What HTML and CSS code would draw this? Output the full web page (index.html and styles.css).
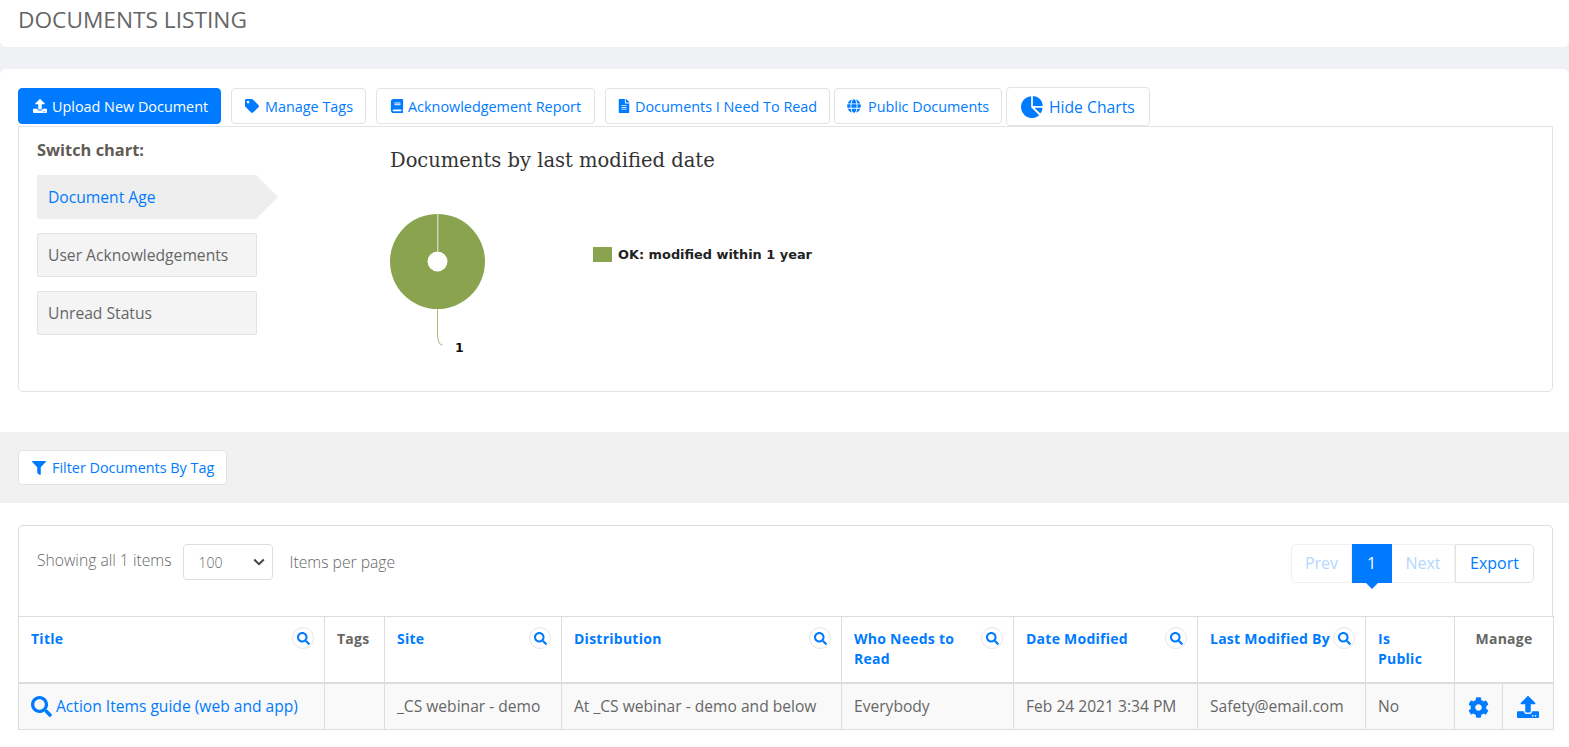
FILE: index.html
```html
<!DOCTYPE html>
<html lang="en">
<head>
<meta charset="utf-8">
<title>Documents Listing</title>
<link rel="stylesheet" href="styles.css">
</head>
<body>
<div class="top-zone">
<header class="page-head"><h1>DOCUMENTS LISTING</h1></header>

<section class="panel">
  <div class="toolbar">
    <a class="btn btn-primary"><svg class="ico" viewBox="0 0 512 512"><path d="M296 384h-80c-13.3 0-24-10.7-24-24V192h-87.7c-17.8 0-26.7-21.5-14.1-34.1L242.3 5.7c7.5-7.5 19.8-7.5 27.3 0l152.2 152.2c12.6 12.6 3.7 34.1-14.1 34.1H320v168c0 13.3-10.7 24-24 24zm216-8v112c0 13.3-10.7 24-24 24H24c-13.3 0-24-10.7-24-24V376c0-13.3 10.7-24 24-24h136v8c0 30.9 25.1 56 56 56h80c30.9 0 56-25.1 56-56v-8h136c13.3 0 24 10.7 24 24zm-124 88c0-11-9-20-20-20s-20 9-20 20 9 20 20 20 20-9 20-20zm64 0c0-11-9-20-20-20s-20 9-20 20 9 20 20 20 20-9 20-20z"/></svg>Upload New Document</a>
    <a class="btn btn-tags"><svg class="ico" viewBox="0 0 512 512"><path d="M0 252.118V48C0 21.49 21.49 0 48 0h204.118a48 48 0 0 1 33.941 14.059l211.882 211.882c18.745 18.745 18.745 49.137 0 67.882L293.823 497.941c-18.745 18.745-49.137 18.745-67.882 0L14.059 286.059A48 48 0 0 1 0 252.118zM112 64c-26.51 0-48 21.49-48 48s21.49 48 48 48 48-21.49 48-48-21.49-48-48-48z"/></svg>Manage Tags</a>
    <a class="btn btn-ack"><svg class="ico" viewBox="0 0 448 512"><path d="M448 360V24c0-13.3-10.7-24-24-24H96C43 0 0 43 0 96v320c0 53 43 96 96 96h328c13.3 0 24-10.7 24-24v-16c0-7.5-3.5-14.3-8.9-18.7-4.2-15.4-4.2-59.3 0-74.7 5.4-4.3 8.9-11.1 8.9-18.6zM128 134c0-3.3 2.7-6 6-6h212c3.3 0 6 2.7 6 6v20c0 3.3-2.7 6-6 6H134c-3.3 0-6-2.7-6-6v-20zm0 64c0-3.3 2.7-6 6-6h212c3.3 0 6 2.7 6 6v20c0 3.3-2.7 6-6 6H134c-3.3 0-6-2.7-6-6v-20zm253.4 250H96c-17.7 0-32-14.3-32-32 0-17.6 14.4-32 32-32h285.4c-1.9 17.1-1.9 46.9 0 64z"/></svg>Acknowledgement Report</a>
    <a class="btn btn-read"><svg class="ico" viewBox="0 0 384 512"><path d="M224 136V0H24C10.7 0 0 10.7 0 24v464c0 13.3 10.7 24 24 24h336c13.3 0 24-10.7 24-24V160H248c-13.2 0-24-10.8-24-24zm64 236c0 6.6-5.4 12-12 12H108c-6.6 0-12-5.4-12-12v-8c0-6.6 5.4-12 12-12h168c6.6 0 12 5.4 12 12v8zm0-64c0 6.6-5.4 12-12 12H108c-6.6 0-12-5.4-12-12v-8c0-6.6 5.4-12 12-12h168c6.6 0 12 5.4 12 12v8zm0-72v8c0 6.6-5.4 12-12 12H108c-6.6 0-12-5.4-12-12v-8c0-6.6 5.4-12 12-12h168c6.6 0 12 5.4 12 12zm96-114.1v6.1H256V0h6.1c6.4 0 12.5 2.5 17 7l97.9 98c4.5 4.5 7 10.6 7 16.9z"/></svg>Documents I Need To Read</a>
    <a class="btn btn-public"><svg class="ico" viewBox="0 0 496 512"><path d="M336.5 160C322 70.7 287.8 8 248 8s-74 62.7-88.5 152h177zM152 256c0 22.2 1.2 43.5 3.3 64h185.3c2.1-20.5 3.3-41.8 3.3-64s-1.2-43.5-3.3-64H155.3c-2.1 20.5-3.3 41.8-3.3 64zm324.7-96c-28.6-67.9-86.5-120.4-158-141.6 24.4 33.8 41.2 84.7 50 141.6h108zM177.2 18.4C105.8 39.6 47.8 92.1 19.3 160h108c8.7-56.9 25.5-107.8 49.9-141.6zM487.4 192H372.7c2.1 21 3.3 42.5 3.3 64s-1.2 43-3.3 64h114.6c5.5-20.5 8.6-41.8 8.6-64s-3.1-43.5-8.5-64zM120 256c0-21.5 1.2-43 3.3-64H8.6C3.2 212.5 0 233.8 0 256s3.2 43.5 8.6 64h114.6c-2-21-3.2-42.5-3.2-64zm39.5 96c14.5 89.3 48.7 152 88.5 152s74-62.7 88.5-152h-177zm159.3 141.6c71.4-21.2 129.4-73.7 158-141.6h-108c-8.8 56.9-25.6 107.8-50 141.6zM19.3 352c28.6 67.9 86.5 120.4 158 141.6-24.4-33.8-41.2-84.7-50-141.6h-108z"/></svg>Public Documents</a>
    <a class="btn btn-hide"><svg class="ico-lg" viewBox="0 0 24 24"><path d="M10.6 1.2v11.6l8.4 8.3A11.4 11.4 0 1 1 10.6 1.2z"/><path d="M12.4 1v10.4h10.4A10.4 10.4 0 0 0 12.4 1z"/><path d="M14 13.2l8.4 0a11 11 0 0 1-2.2 6.2z"/></svg>Hide Charts</a>
  </div>

  <div class="chart-box">
    <aside class="switcher">
      <h2>Switch chart:</h2>
      <a class="sw sw-active">Document Age</a>
      <a class="sw">User Acknowledgements</a>
      <a class="sw">Unread Status</a>
    </aside>
    <div class="chart">
      <h3>Documents by last modified date</h3>
      <div class="chart-body">
        <svg class="pie" width="110" height="150" viewBox="0 0 110 150">
          <circle cx="47.5" cy="47.5" r="47.5" fill="#8aa34f"/>
          <circle cx="47.5" cy="47.5" r="10" fill="#fff"/>
          <rect x="47" y="0" width="1.4" height="38" fill="#cfd8b4"/>
          <path d="M47.5 95v24q0 12 5 12" fill="none" stroke="#a9bb78" stroke-width="1"/>
          <text x="65" y="138" class="pie-label">1</text>
        </svg>
        <div class="legend"><span class="swatch"></span><span class="legend-text">OK: modified within 1 year</span></div>
      </div>
    </div>
  </div>
</section>
</div>

<section class="filter-band">
  <a class="btn btn-filter"><svg class="ico" viewBox="0 0 512 512"><path d="M487.976 0H24.028C2.71 0-8.047 25.866 7.058 40.971L192 225.941V432c0 7.831 3.821 15.17 10.237 19.662l80 55.98C298.02 518.69 320 507.493 320 487.98V225.941l184.947-184.97C520.021 25.896 509.338 0 487.976 0z"/></svg>Filter Documents By Tag</a>
</section>

<section class="list">
  <div class="list-top">
    <div class="list-info">
      <span class="showing">Showing all 1 items</span>
      <span class="select">100<svg class="chev" viewBox="0 0 12 8"><path d="M1.2 1.5L6 6.2l4.8-4.7" fill="none" stroke="#444" stroke-width="2"/></svg></span>
      <span class="perpage">Items per page</span>
    </div>
    <nav class="pager">
      <a class="pg pg-prev">Prev</a>
      <a class="pg pg-cur">1</a>
      <a class="pg pg-next">Next</a>
      <a class="pg pg-export">Export</a>
    </nav>
  </div>
  <table>
    <colgroup>
      <col class="c1"><col class="c2"><col class="c3"><col class="c4"><col class="c5"><col class="c6"><col class="c7"><col class="c8"><col class="c9"><col class="c10">
    </colgroup>
    <thead>
      <tr>
        <th><div class="th-in"><a>Title</a><span class="sb"><svg viewBox="0 0 512 512"><path d="M505 442.7L405.3 343c-4.5-4.5-10.6-7-17-7H372c27.6-35.3 44-79.7 44-128C416 93.1 322.9 0 208 0S0 93.1 0 208s93.1 208 208 208c48.3 0 92.7-16.4 128-44v16.3c0 6.4 2.5 12.5 7 17l99.7 99.7c9.4 9.4 24.6 9.4 33.9 0l28.3-28.3c9.4-9.4 9.4-24.6.1-34zM208 336c-70.7 0-128-57.2-128-128 0-70.7 57.2-128 128-128 70.7 0 128 57.2 128 128 0 70.7-57.2 128-128 128z"/></svg></span></div></th>
        <th class="plain">Tags</th>
        <th><div class="th-in"><a>Site</a><span class="sb"><svg viewBox="0 0 512 512"><path d="M505 442.7L405.3 343c-4.5-4.5-10.6-7-17-7H372c27.6-35.3 44-79.7 44-128C416 93.1 322.9 0 208 0S0 93.1 0 208s93.1 208 208 208c48.3 0 92.7-16.4 128-44v16.3c0 6.4 2.5 12.5 7 17l99.7 99.7c9.4 9.4 24.6 9.4 33.9 0l28.3-28.3c9.4-9.4 9.4-24.6.1-34zM208 336c-70.7 0-128-57.2-128-128 0-70.7 57.2-128 128-128 70.7 0 128 57.2 128 128 0 70.7-57.2 128-128 128z"/></svg></span></div></th>
        <th><div class="th-in"><a>Distribution</a><span class="sb"><svg viewBox="0 0 512 512"><path d="M505 442.7L405.3 343c-4.5-4.5-10.6-7-17-7H372c27.6-35.3 44-79.7 44-128C416 93.1 322.9 0 208 0S0 93.1 0 208s93.1 208 208 208c48.3 0 92.7-16.4 128-44v16.3c0 6.4 2.5 12.5 7 17l99.7 99.7c9.4 9.4 24.6 9.4 33.9 0l28.3-28.3c9.4-9.4 9.4-24.6.1-34zM208 336c-70.7 0-128-57.2-128-128 0-70.7 57.2-128 128-128 70.7 0 128 57.2 128 128 0 70.7-57.2 128-128 128z"/></svg></span></div></th>
        <th><div class="th-in"><a>Who Needs to Read</a><span class="sb"><svg viewBox="0 0 512 512"><path d="M505 442.7L405.3 343c-4.5-4.5-10.6-7-17-7H372c27.6-35.3 44-79.7 44-128C416 93.1 322.9 0 208 0S0 93.1 0 208s93.1 208 208 208c48.3 0 92.7-16.4 128-44v16.3c0 6.4 2.5 12.5 7 17l99.7 99.7c9.4 9.4 24.6 9.4 33.9 0l28.3-28.3c9.4-9.4 9.4-24.6.1-34zM208 336c-70.7 0-128-57.2-128-128 0-70.7 57.2-128 128-128 70.7 0 128 57.2 128 128 0 70.7-57.2 128-128 128z"/></svg></span></div></th>
        <th><div class="th-in"><a>Date Modified</a><span class="sb"><svg viewBox="0 0 512 512"><path d="M505 442.7L405.3 343c-4.5-4.5-10.6-7-17-7H372c27.6-35.3 44-79.7 44-128C416 93.1 322.9 0 208 0S0 93.1 0 208s93.1 208 208 208c48.3 0 92.7-16.4 128-44v16.3c0 6.4 2.5 12.5 7 17l99.7 99.7c9.4 9.4 24.6 9.4 33.9 0l28.3-28.3c9.4-9.4 9.4-24.6.1-34zM208 336c-70.7 0-128-57.2-128-128 0-70.7 57.2-128 128-128 70.7 0 128 57.2 128 128 0 70.7-57.2 128-128 128z"/></svg></span></div></th>
        <th><div class="th-in"><a>Last Modified By</a><span class="sb"><svg viewBox="0 0 512 512"><path d="M505 442.7L405.3 343c-4.5-4.5-10.6-7-17-7H372c27.6-35.3 44-79.7 44-128C416 93.1 322.9 0 208 0S0 93.1 0 208s93.1 208 208 208c48.3 0 92.7-16.4 128-44v16.3c0 6.4 2.5 12.5 7 17l99.7 99.7c9.4 9.4 24.6 9.4 33.9 0l28.3-28.3c9.4-9.4 9.4-24.6.1-34zM208 336c-70.7 0-128-57.2-128-128 0-70.7 57.2-128 128-128 70.7 0 128 57.2 128 128 0 70.7-57.2 128-128 128z"/></svg></span></div></th>
        <th><a class="narrow">Is Public</a></th>
        <th class="plain center" colspan="2">Manage</th>
      </tr>
    </thead>
    <tbody>
      <tr>
        <td><a class="doc-link"><svg viewBox="0 0 512 512"><path d="M505 442.7L405.3 343c-4.5-4.5-10.6-7-17-7H372c27.6-35.3 44-79.7 44-128C416 93.1 322.9 0 208 0S0 93.1 0 208s93.1 208 208 208c48.3 0 92.7-16.4 128-44v16.3c0 6.4 2.5 12.5 7 17l99.7 99.7c9.4 9.4 24.6 9.4 33.9 0l28.3-28.3c9.4-9.4 9.4-24.6.1-34zM208 336c-70.7 0-128-57.2-128-128 0-70.7 57.2-128 128-128 70.7 0 128 57.2 128 128 0 70.7-57.2 128-128 128z"/></svg>Action Items guide (web and app)</a></td>
        <td></td>
        <td>_CS webinar - demo</td>
        <td>At _CS webinar - demo and below</td>
        <td>Everybody</td>
        <td>Feb 24 2021 3:34 PM</td>
        <td>Safety@email.com</td>
        <td>No</td>
        <td class="act"><svg viewBox="0 0 512 512"><path d="M487.4 315.7l-42.6-24.6c4.3-23.2 4.3-47 0-70.2l42.6-24.6c4.9-2.8 7.1-8.6 5.5-14-11.1-35.6-30-67.8-54.7-94.6-3.8-4.1-10-5.1-14.8-2.3L380.8 110c-17.9-15.4-38.5-27.3-60.8-35.1V25.8c0-5.6-3.9-10.5-9.4-11.7-36.7-8.2-74.3-7.8-109.2 0-5.5 1.2-9.4 6.1-9.4 11.7V75c-22.2 7.9-42.8 19.8-60.8 35.1L88.7 85.5c-4.9-2.8-11-1.9-14.8 2.3-24.7 26.7-43.6 58.9-54.7 94.6-1.7 5.4.6 11.2 5.5 14L67.3 221c-4.3 23.2-4.3 47 0 70.2l-42.6 24.6c-4.9 2.8-7.1 8.6-5.5 14 11.1 35.6 30 67.8 54.7 94.6 3.8 4.1 10 5.1 14.8 2.3l42.6-24.6c17.9 15.4 38.5 27.3 60.8 35.1v49.2c0 5.6 3.9 10.5 9.4 11.7 36.7 8.2 74.3 7.8 109.2 0 5.5-1.2 9.4-6.1 9.4-11.7v-49.2c22.2-7.9 42.8-19.8 60.8-35.1l42.6 24.6c4.9 2.8 11 1.9 14.8-2.3 24.7-26.7 43.6-58.9 54.7-94.6 1.5-5.5-.7-11.3-5.6-14.1zM256 336c-44.1 0-80-35.9-80-80s35.9-80 80-80 80 35.9 80 80-35.9 80-80 80z"/></svg></td>
        <td class="act"><svg class="act-up" viewBox="0 0 512 512"><path d="M296 384h-80c-13.3 0-24-10.7-24-24V192h-87.7c-17.8 0-26.7-21.5-14.1-34.1L242.3 5.7c7.5-7.5 19.8-7.5 27.3 0l152.2 152.2c12.6 12.6 3.7 34.1-14.1 34.1H320v168c0 13.3-10.7 24-24 24zm216-8v112c0 13.3-10.7 24-24 24H24c-13.3 0-24-10.7-24-24V376c0-13.3 10.7-24 24-24h136v8c0 30.9 25.1 56 56 56h80c30.9 0 56-25.1 56-56v-8h136c13.3 0 24 10.7 24 24zm-124 88c0-11-9-20-20-20s-20 9-20 20 9 20 20 20 20-9 20-20zm64 0c0-11-9-20-20-20s-20 9-20 20 9 20 20 20 20-9 20-20z"/></svg></td>
      </tr>
    </tbody>
  </table>
</section>
</body>
</html>
```

FILE: styles.css
```css
* { box-sizing: border-box; }
html, body { margin: 0; padding: 0; }
body {
  background: #fff;
  font-family: "Open Sans", sans-serif;
  color: #666;
  font-size: 14px;
  overflow: hidden;
  height: 747px;
}
a { color: #007bff; text-decoration: none; }

.top-zone { background: #f0f1f5; }

.page-head {
  height: 47px;
  padding: 4px 18px 0;
  background: #fff;
  border-radius: 0 0 6px 6px;
}
.page-head h1 {
  margin: 0;
  font-size: 22.7px;
  line-height: 32px;
  font-weight: 400;
  color: #666;
}

.panel {
  margin-top: 22px;
  height: 363px;
  padding: 19px 16px 0 18px;
  background: #fff;
  border-radius: 6px 6px 0 0;
}

.toolbar { display: flex; align-items: flex-start; height: 38px; }
.btn {
  display: inline-flex;
  align-items: center;
  height: 36px;
  border: 1px solid #e3e3e3;
  border-radius: 4px;
  background: #fff;
  font-size: 14.4px;
  white-space: nowrap;
}
.ico { width: 14px; height: 14px; fill: currentColor; margin-right: 6px; flex: none; }
.btn-primary { width: 203px; background: #007bff; border-color: #007bff; color: #fff; padding-left: 13px; margin-right: 10px; }
.btn-primary .ico { width: 16px; margin-right: 4px; }
.btn-tags { width: 135px; padding-left: 13px; margin-right: 10px; }
.btn-ack { width: 219px; padding-left: 13px; margin-right: 10px; }
.btn-ack .ico { margin-right: 4px; }
.btn-read { width: 225px; padding-left: 11px; margin-right: 4px; }
.btn-read .ico { margin-right: 4px; }
.btn-public { width: 168px; padding-left: 12px; margin-right: 4px; }
.btn-public .ico { margin-right: 7px; }
.btn-hide { width: 144px; height: 39px; margin-top: -1px; padding-left: 14px; font-size: 15.7px; }
.ico-lg { width: 23px; height: 23px; fill: currentColor; margin-right: 5px; flex: none; }

.chart-box {
  display: flex;
  height: 266px;
  border: 1px solid #e3e3e3;
  border-radius: 0 0 5px 5px;
  padding: 12px 18px 0;
}
.switcher { width: 353px; flex: none; }
.switcher h2 { margin: 0 0 14px; font-size: 16.4px; line-height: 22px; font-weight: 700; color: #5f5a55; }
.sw {
  display: block;
  width: 220px;
  height: 44px;
  margin-bottom: 14px;
  padding-left: 10px;
  line-height: 42px;
  font-size: 15.65px;
  color: #666;
  background: #f4f4f4;
  border: 1px solid #e3e3e3;
  border-radius: 2px;
}
.sw-active {
  position: relative;
  color: #007bff;
  background: #eee;
  border-color: #eee;
}
.sw-active::after {
  content: "";
  position: absolute;
  top: -1px;
  left: 218px;
  border-left: 22px solid #eee;
  border-top: 22px solid transparent;
  border-bottom: 22px solid transparent;
}

.chart { flex: 1; }
.chart h3 {
  margin: 7px 0 0;
  font-family: "DejaVu Serif", serif;
  font-weight: 400;
  font-size: 19.5px;
  line-height: 30px;
  color: #333;
}
.chart-body { display: flex; margin-top: 38px; }
.pie { flex: none; }
.pie-label { font: 700 12.5px "DejaVu Sans", sans-serif; fill: #111; }
.legend { display: flex; align-items: center; margin: 31px 0 0 93px; height: 18px; }
.swatch { width: 19px; height: 15px; background: #8aa34f; margin-right: 6px; }
.legend-text { font-weight: 700; font-size: 12.9px; font-family: "DejaVu Sans", sans-serif; color: #222; }

.filter-band {
  height: 71px;
  background: #f1f1f2;
  padding: 18px 18px 0;
}
.btn-filter { width: 209px; height: 35px; padding-left: 13px; }

.list { padding: 22px 16px 0 18px; }
.list-top {
  display: flex;
  justify-content: space-between;
  height: 91px;
  padding: 18px 18px 0;
  border: 1px solid #ddd;
  border-bottom: 0;
  border-radius: 5px 5px 0 0;
}
.list-info { display: flex; align-items: flex-start; font-weight: 300; font-size: 15.7px; color: #666; }
.showing { line-height: 32px; }
.select {
  display: flex;
  align-items: center;
  justify-content: space-between;
  width: 90px;
  height: 36px;
  margin: 0 16px 0 12px;
  padding: 0 7px 0 14px;
  border: 1px solid #ddd;
  border-radius: 4px;
  font-size: 14px;
}
.chev { width: 12px; height: 8px; }
.perpage { line-height: 36px; }

.pager { display: flex; height: 39px; }
.pg {
  display: block;
  line-height: 37px;
  text-align: center;
  font-size: 16px;
  border: 1px solid #f0f0f0;
  border-left: 0;
}
.pg-prev { width: 61px; color: #b3d7ff; border-left: 1px solid #f0f0f0; border-radius: 5px 0 0 5px; }
.pg-next { width: 63px; color: #b3d7ff; }
.pg-cur { position: relative; width: 40px; background: #007bff; border-color: #007bff; color: #fff; }
.pg-cur::after {
  content: "";
  position: absolute;
  left: 14px;
  top: 38px;
  border-top: 6px solid #007bff;
  border-left: 6px solid transparent;
  border-right: 6px solid transparent;
}
.pg-export { width: 79px; border-color: #e3e3e3; border-left: 1px solid #e3e3e3; border-radius: 0 5px 5px 0; }

table { width: 1535px; border-collapse: collapse; table-layout: fixed; }
.c1 { width: 306px; }
.c2 { width: 60px; }
.c3 { width: 177px; }
.c4 { width: 280px; }
.c5 { width: 172px; }
.c6 { width: 184px; }
.c7 { width: 168px; }
.c8 { width: 89px; }
.c9 { width: 48px; }
.c10 { width: 51px; }

th {
  height: 66px;
  padding: 12px 12px 0;
  vertical-align: top;
  text-align: left;
  font-size: 14px;
  line-height: 20px;
  font-weight: 700;
  letter-spacing: .25px;
  border: 1px solid #ddd;
  border-bottom: 2px solid #ddd;
  color: #666;
}
th.center { text-align: center; }
.th-in { display: flex; justify-content: space-between; align-items: flex-start; margin: -2px -2px 0 0; }
.th-in a { padding-top: 2px; }
.narrow { display: block; width: 50px; }
.sb {
  display: flex;
  align-items: center;
  justify-content: center;
  flex: none;
  width: 22px;
  height: 22px;
  border: 1px solid #e6e6e6;
  border-radius: 50%;
}
.sb svg { width: 13px; height: 13px; fill: #007bff; }

td {
  height: 47px;
  padding: 0 12px;
  font-size: 15.6px;
  color: #666;
  background: #f9f9f9;
  border: 1px solid #ddd;
  white-space: nowrap;
}
.doc-link { display: flex; align-items: center; }
.doc-link svg { width: 21px; height: 21px; fill: #007bff; margin-right: 4px; }
.act { padding: 0; text-align: center; }
.act svg { display: inline-block; width: 21px; height: 21px; fill: #007bff; vertical-align: middle; }
.act .act-up { width: 22px; height: 22px; }
```
